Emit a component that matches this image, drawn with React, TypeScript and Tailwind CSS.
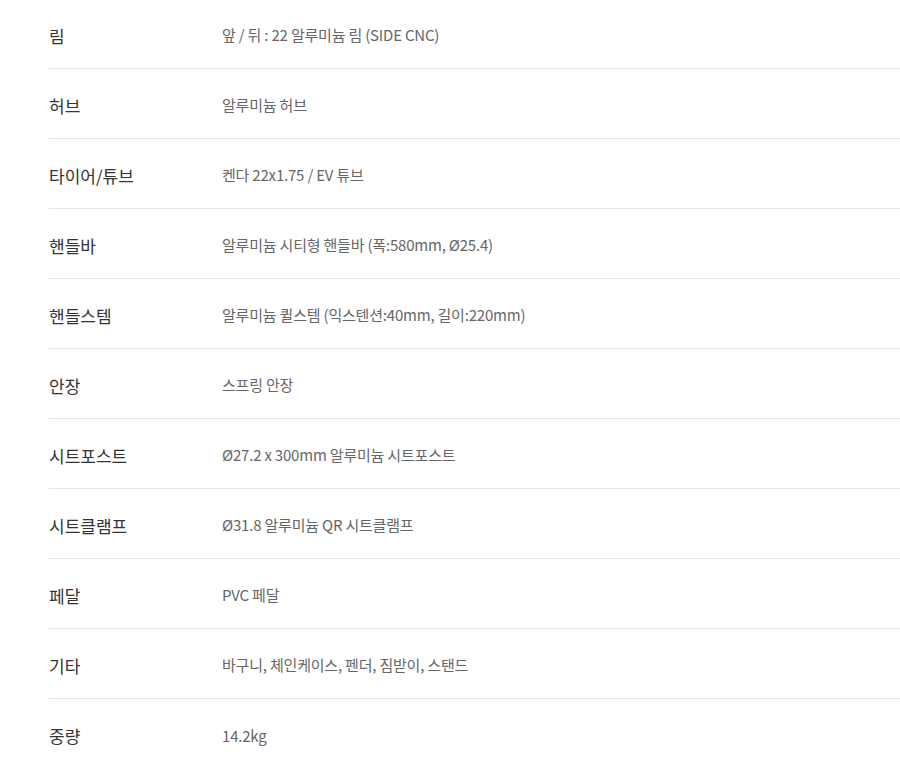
const specs = [
  { label: "림", value: "앞 / 뒤 : 22 알루미늄 림 (SIDE CNC)" },
  { label: "허브", value: "알루미늄 허브" },
  { label: "타이어/튜브", value: "켄다 22x1.75 / EV 튜브" },
  { label: "핸들바", value: "알루미늄 시티형 핸들바 (폭:580mm, Ø25.4)" },
  { label: "핸들스템", value: "알루미늄 퀼스템 (익스텐션:40mm, 길이:220mm)" },
  { label: "안장", value: "스프링 안장" },
  { label: "시트포스트", value: "Ø27.2 x 300mm 알루미늄 시트포스트" },
  { label: "시트클램프", value: "Ø31.8 알루미늄 QR 시트클램프" },
  { label: "페달", value: "PVC 페달" },
  { label: "기타", value: "바구니, 체인케이스, 펜더, 짐받이, 스탠드" },
  { label: "중량", value: "14.2kg" },
];

const App = () => {
  return (
    <div
      className="min-h-screen bg-white pl-[49px] mt-[-1px]"
      style={{ fontFamily: '"Noto Sans CJK KR", "Noto Sans", sans-serif' }}
    >
      {specs.map((row, i) => (
        <div
          key={row.label}
          className={`flex items-center h-[70px] pt-[4px] ${
            i < specs.length - 1 ? "border-b border-[#e5e5e5]" : ""
          }`}
        >
          <div className="w-[173px] shrink-0 text-[17px] text-[#333]">{row.label}</div>
          <div className="text-[15px] text-[#666] tracking-[-0.2px]">{row.value}</div>
        </div>
      ))}
    </div>
  );
};

export default App;
